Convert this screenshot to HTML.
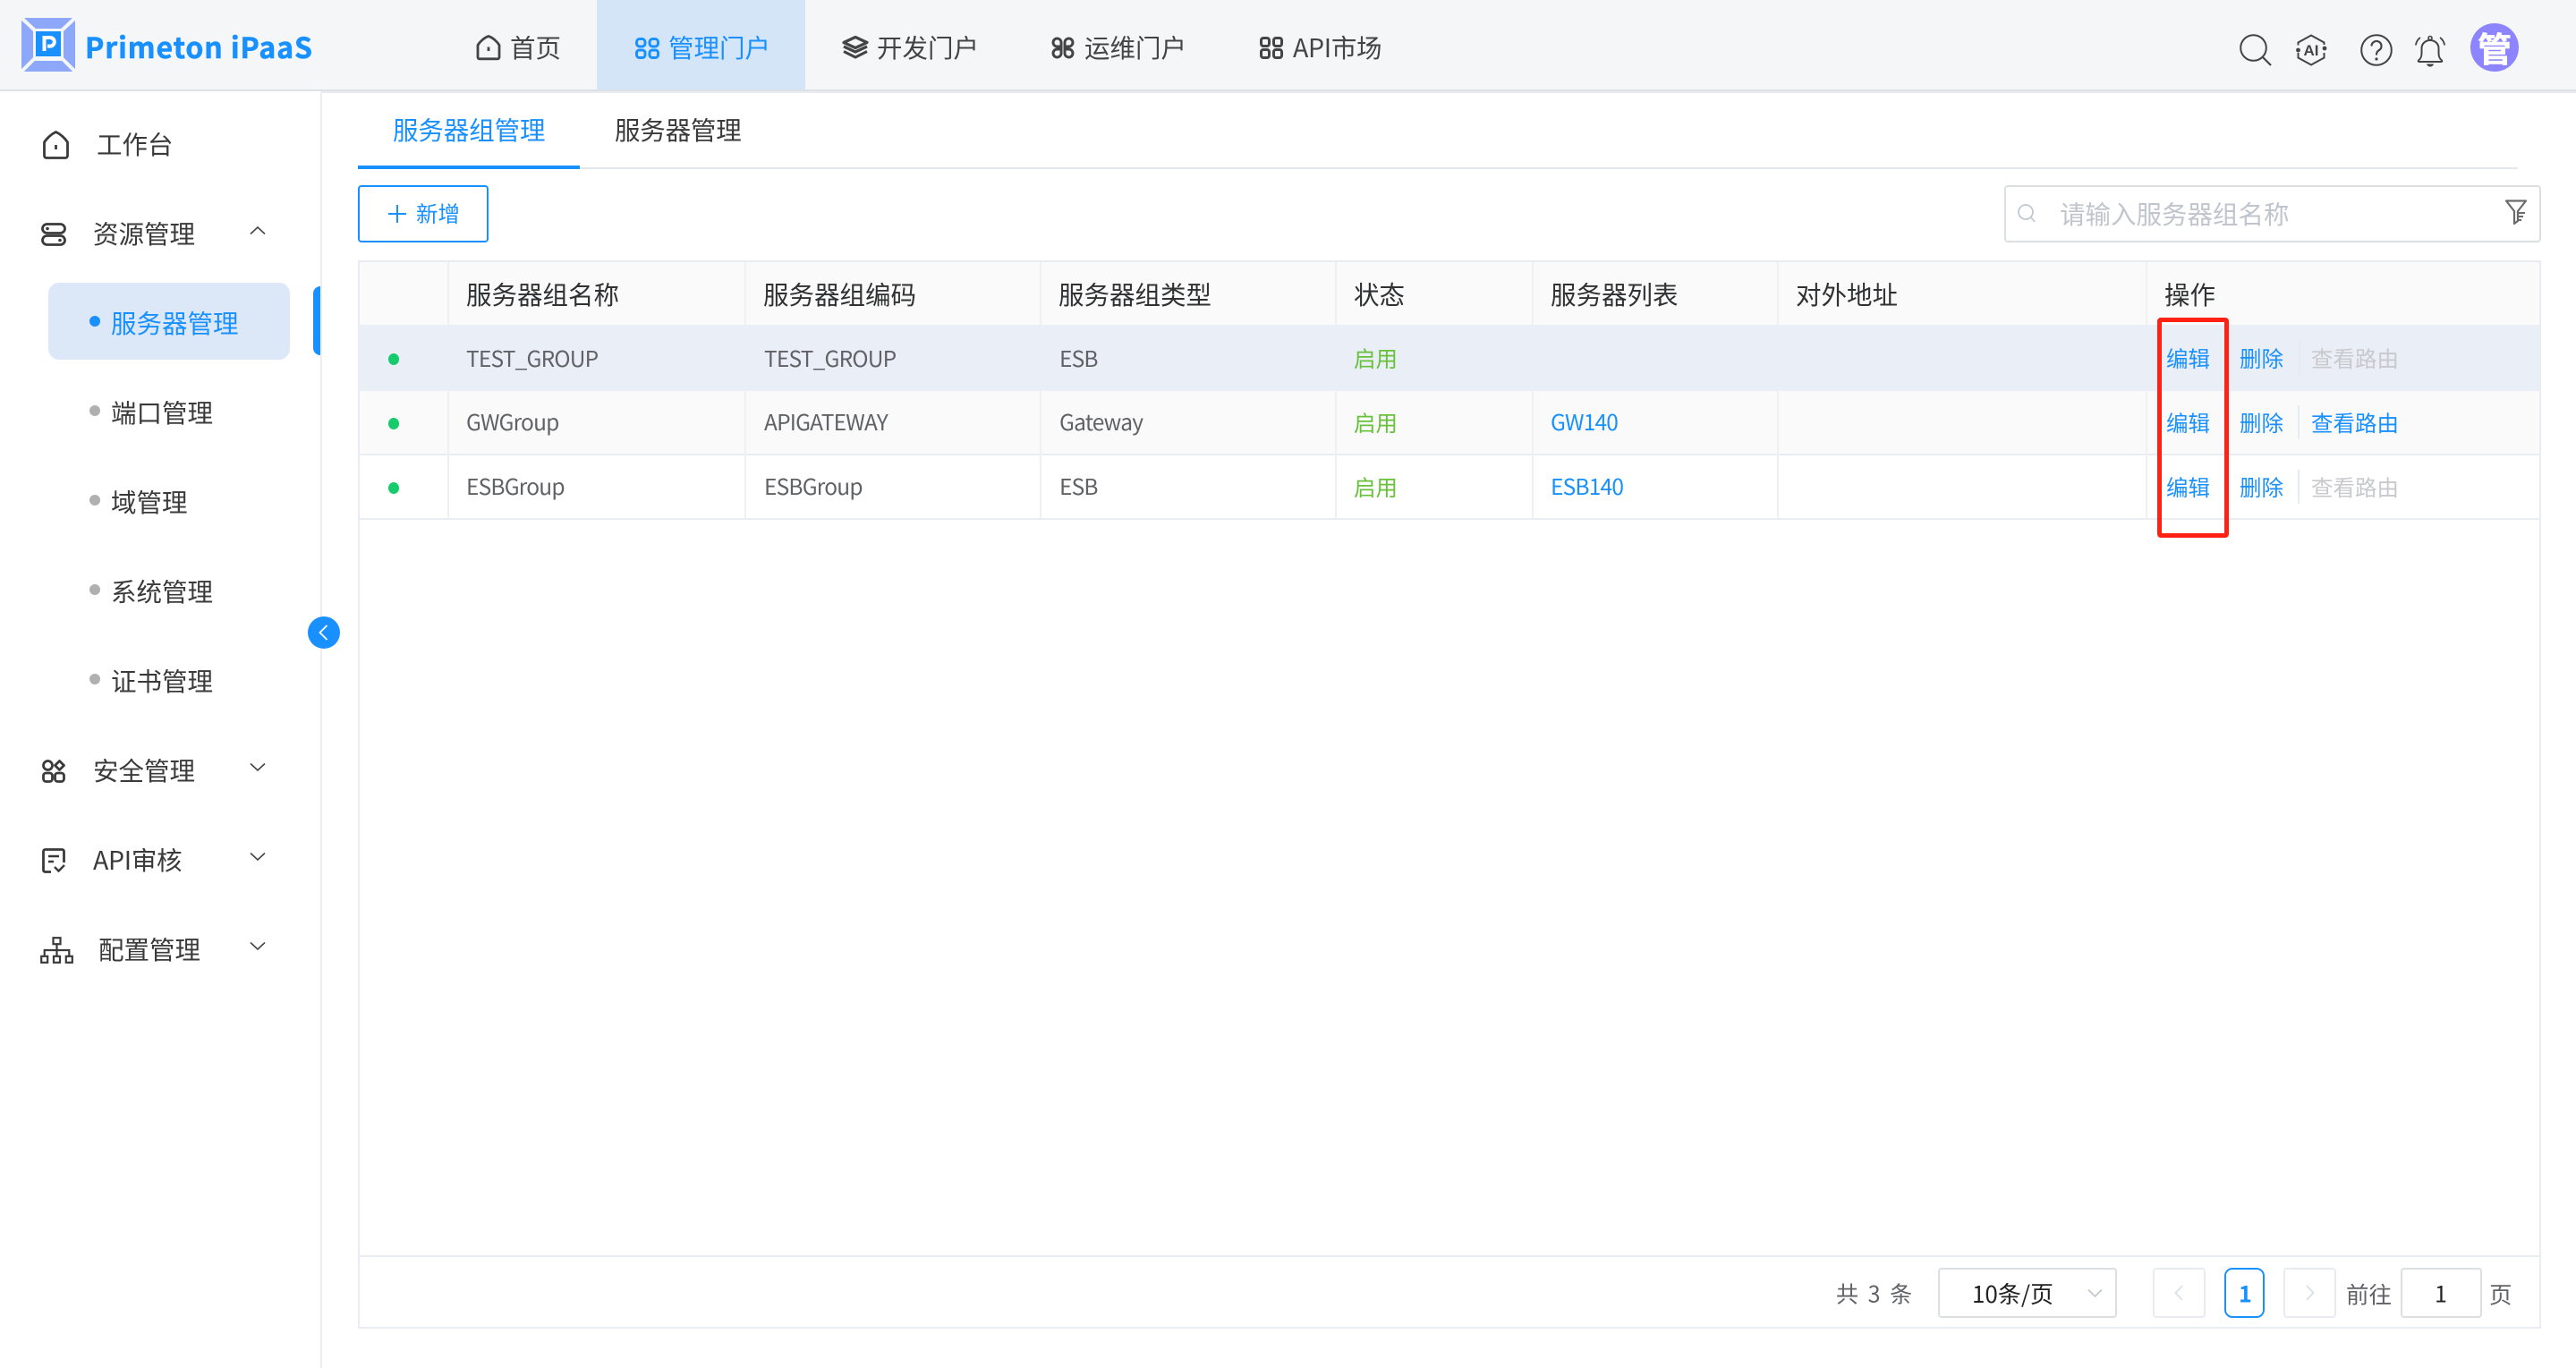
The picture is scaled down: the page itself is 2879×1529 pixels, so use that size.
<!DOCTYPE html>
<html lang="zh">
<head>
<meta charset="utf-8">
<title>Primeton iPaaS</title>
<style>
html,body{margin:0;padding:0;background:#fff}
body{width:2879px;height:1529px;position:relative;overflow:hidden;font-family:"Noto Sans CJK SC","Liberation Sans",sans-serif;color:#333}
.t{position:absolute;line-height:1;white-space:nowrap;transform:translateY(-50%)}
.b{position:absolute;box-sizing:border-box}
svg{position:absolute;overflow:visible;fill:none}
.nav{font-size:28.5px;color:#444}
.side{font-size:28.5px;color:#3a3a3a}
.th{font-size:28.5px;color:#303133}
.td{font-size:24.5px;color:#606266}
.l{letter-spacing:-.8px}
.blue{color:#1890ff}
.green{color:#67c23a}
.dis{color:#c8c9cc}
.dot{position:absolute;width:12px;height:12px;border-radius:50%;background:#b0b0b0}
.gd{position:absolute;width:12px;height:13px;border-radius:50%;background:#15cb6b}
</style>
</head>
<body>
<!-- header -->
<div class="b" style="left:0;top:0;width:2879px;height:100px;background:#f4f6f8"></div>
<div class="b" style="left:0;top:100px;width:2879px;height:2px;background:#dfe1e4"></div>
<div class="b" style="left:360px;top:102px;width:2519px;height:2px;background:#e8ebef"></div>
<div class="b" style="left:667px;top:0;width:233px;height:100px;background:#d4e5f8"></div>

<!-- logo -->
<svg style="left:24px;top:20px" width="60" height="60" viewBox="0 0 60 60">
<rect width="60" height="60" rx="4" fill="#8da8f8"/>
<path d="M0 0L16 15M60 0L44 15M0 60L16 44M60 60L44 44" stroke="#f4f6f8" stroke-width="4"/>
<rect x="13" y="12" width="34" height="36" fill="#f4f6f8"/>
<rect x="16" y="15" width="28" height="28" fill="#1890ff"/>
<path d="M25.500 37V22h6.500a4.800 4.800 0 0 1 0 9.600h-3" stroke="#fff" stroke-width="4"/>
</svg>
<div class="t" style="left:95px;top:52px;font-size:32px;font-weight:700;color:#1890ff;letter-spacing:.9px;-webkit-text-stroke:.5px #1890ff">Primeton iPaaS</div>

<!-- nav -->
<svg style="left:532px;top:39px" width="28" height="28" viewBox="0 0 28 28"><path d="M2 11.500C4 8 9 3 14 1.500C19 3 24 8 26 11.500V25a1.800 1.800 0 0 1-1.800 1.800H3.800A1.800 1.800 0 0 1 2 25Z" stroke="#444" stroke-width="2.800"/><path d="M14 13.500V18" stroke="#444" stroke-width="2.800"/></svg>
<div class="t nav" style="left:570px;top:53px">首页</div>

<svg style="left:710px;top:42px" width="27" height="24" viewBox="0 0 27 24"><g stroke="#1890ff" stroke-width="3"><rect x="1.500" y="1.500" width="9.500" height="8.500" rx="3.500"/><rect x="16" y="1.500" width="9.500" height="8.500" rx="3.500"/><rect x="1.500" y="14" width="9.500" height="8.500" rx="3"/><rect x="16" y="14" width="9.500" height="8.500" rx="3"/></g></svg>
<div class="t nav blue" style="left:747px;top:53px">管理门户</div>

<svg style="left:941px;top:40px" width="30" height="26" viewBox="0 0 30 26"><g stroke="#444" stroke-width="3.200" stroke-linejoin="round"><path d="M15 1.500L28 7.500L15 13.500L2 7.500Z"/><path d="M2 12L15 18L28 12"/><path d="M2 17.500L15 24L28 17.500"/></g></svg>
<div class="t nav" style="left:980px;top:53px">开发门户</div>

<svg style="left:1175px;top:41px" width="26" height="25" viewBox="0 0 26 25"><g stroke="#444" stroke-width="3"><path d="M11 11H6a4.500 4.500 0 1 1 5-5Z"/><path d="M15 11h5a4.500 4.500 0 1 0-5-5Z"/><path d="M11 14H6a4.500 4.500 0 1 0 5 5Z"/><path d="M15 14h5a4.500 4.500 0 1 1-5 5Z"/></g></svg>
<div class="t nav" style="left:1212px;top:53px">运维门户</div>

<svg style="left:1408px;top:41px" width="26" height="25" viewBox="0 0 26 25"><g stroke="#444" stroke-width="3"><rect x="1.500" y="1.500" width="9" height="9" rx="2.500"/><rect x="15.500" y="1.500" width="9" height="9" rx="2.500"/><rect x="1.500" y="14.500" width="9" height="9" rx="2.500"/><rect x="15.500" y="14.500" width="9" height="9" rx="2.500"/></g></svg>
<div class="t nav" style="left:1445px;top:53px;letter-spacing:-.3px">API市场</div>

<!-- header right icons -->
<svg style="left:2503px;top:38px" width="36" height="36" viewBox="0 0 36 36"><circle cx="15.500" cy="15.500" r="14.300" stroke="#444" stroke-width="2"/><path d="M26 26L35 35" stroke="#444" stroke-width="2.200"/></svg>
<svg style="left:2566px;top:38px" width="35" height="36" viewBox="0 0 35 36"><path d="M2.500 12.500V9.500L17 1.500L31.500 9.500V12M31.500 21V26.500L17 34.500L2.500 26.500V21" stroke="#444" stroke-width="2"/><circle cx="2.500" cy="18" r="2.400" fill="#444"/><circle cx="32" cy="16" r="2.400" fill="#444"/><text x="17" y="24" text-anchor="middle" font-family="Liberation Sans,sans-serif" font-weight="700" font-size="17" fill="#444">AI</text></svg>
<svg style="left:2638px;top:38px" width="36" height="36" viewBox="0 0 36 36"><circle cx="18" cy="18" r="16.800" stroke="#444" stroke-width="2"/><path d="M12.500 13.500a5.500 5.500 0 1 1 8.500 4.600c-2 1.300-3 2.400-3 5.400" stroke="#444" stroke-width="2.200"/><circle cx="18" cy="28" r="1.600" fill="#444"/></svg>
<svg style="left:2699px;top:39px" width="34" height="36" viewBox="0 0 34 36"><path d="M4 28.500c2.500-2 3.500-4 3.500-8V15c0-5 4-9 9.500-9s9.500 4 9.500 9v5.500c0 4 1 6 3.500 8 .6.600.2 1.500-.6 1.500H4.600c-.8 0-1.200-.9-.6-1.500Z" stroke="#444" stroke-width="2"/><circle cx="17" cy="3.500" r="2" stroke="#444" stroke-width="1.600"/><path d="M13 32.500h8c-.6 2-2.200 3-4 3s-3.400-1-4-3Z" fill="#444"/><path d="M6 3C3 5 1.500 8 .8 11.500M28 3c3 2 4.500 5 5.200 8.500" stroke="#444" stroke-width="1.800"/></svg>
<div class="b" style="left:2761px;top:26px;width:54px;height:54px;border-radius:50%;background:#8c85ff"></div>
<div class="t" style="left:2769px;top:53px;font-size:38px;font-weight:700;color:#fff;-webkit-text-stroke:.6px #fff">管</div>

<!-- sidebar -->
<div class="b" style="left:358px;top:102px;width:2px;height:1427px;background:#eeeeee"></div>
<svg style="left:48px;top:146px" width="29" height="32" viewBox="0 0 29 32"><path d="M1.500 13C4 9 9 4 14.500 1.500C20 4 25 9 27.500 13V28a2.500 2.500 0 0 1-2.500 2.500H4A2.500 2.500 0 0 1 1.500 28Z" stroke="#3a3a3a" stroke-width="2.800"/><path d="M14.500 16V21" stroke="#3a3a3a" stroke-width="2.800"/></svg>
<div class="t side" style="left:108px;top:161px">工作台</div>

<svg style="left:46px;top:249px" width="28" height="26" viewBox="0 0 28 26"><g stroke="#3a3a3a" stroke-width="2.800"><rect x="1.500" y="1.500" width="25" height="10" rx="5"/><rect x="1.500" y="14.500" width="25" height="10" rx="5"/></g><circle cx="7" cy="6.500" r="1.800" fill="#3a3a3a"/><circle cx="21" cy="19.500" r="1.800" fill="#3a3a3a"/></svg>
<div class="t side" style="left:104px;top:261px">资源管理</div>
<svg style="left:279px;top:253px" width="18" height="9" viewBox="0 0 18 9"><path d="M1 8.500L9 1L17 8.500" stroke="#444" stroke-width="1.600"/></svg>

<div class="b" style="left:54px;top:316px;width:270px;height:86px;border-radius:12px;background:#dce8f7"></div>
<div class="b" style="left:350px;top:320px;width:8px;height:77px;border-radius:8px 0 0 8px;background:#1890ff"></div>
<div class="dot" style="left:100px;top:353px;background:#1890ff"></div>
<div class="t side blue" style="left:124px;top:361px">服务器管理</div>
<div class="dot" style="left:100px;top:453px"></div>
<div class="t side" style="left:124px;top:461px">端口管理</div>
<div class="dot" style="left:100px;top:553px"></div>
<div class="t side" style="left:124px;top:561px">域管理</div>
<div class="dot" style="left:100px;top:653px"></div>
<div class="t side" style="left:124px;top:661px">系统管理</div>
<div class="dot" style="left:100px;top:753px"></div>
<div class="t side" style="left:124px;top:761px">证书管理</div>

<svg style="left:47px;top:849px" width="26" height="26" viewBox="0 0 26 26"><g stroke="#3a3a3a" stroke-width="2.800"><circle cx="6.500" cy="6.500" r="5"/><path d="M19.500 1.500L24.500 6.500L19.500 11.500L14.500 6.500Z" stroke-linejoin="round"/><rect x="1.500" y="15" width="10" height="9.500" rx="3"/><rect x="14.500" y="15" width="10" height="9.500" rx="3"/></g></svg>
<div class="t side" style="left:104px;top:861px">安全管理</div>
<svg style="left:279px;top:853px" width="18" height="9" viewBox="0 0 18 9"><path d="M1 .5L9 8L17 .5" stroke="#444" stroke-width="1.600"/></svg>

<svg style="left:47px;top:948px" width="26" height="28" viewBox="0 0 26 28"><path d="M10 26.500H3.500a2 2 0 0 1-2-2V3.500a2 2 0 0 1 2-2h19a2 2 0 0 1 2 2V16" stroke="#3a3a3a" stroke-width="2.800"/><path d="M7 9h12M7 15h6M14 21l4.500 4.500L25 19" stroke="#3a3a3a" stroke-width="2.400"/></svg>
<div class="t side" style="left:104px;top:961px;letter-spacing:-.3px">API审核</div>
<svg style="left:279px;top:953px" width="18" height="9" viewBox="0 0 18 9"><path d="M1 .5L9 8L17 .5" stroke="#444" stroke-width="1.600"/></svg>

<svg style="left:45px;top:1047px" width="37" height="30" viewBox="0 0 37 30"><g stroke="#3a3a3a" stroke-width="2.200"><rect x="14.500" y="1.200" width="8" height="7"/><rect x="1.200" y="21.800" width="7" height="7"/><rect x="15" y="21.800" width="7" height="7"/><rect x="28.800" y="21.800" width="7" height="7"/><path d="M18.500 8.500V15M4.700 21.500V15H32.300V21.500M18.500 15V21.500"/></g></svg>
<div class="t side" style="left:110px;top:1061px">配置管理</div>
<svg style="left:279px;top:1053px" width="18" height="9" viewBox="0 0 18 9"><path d="M1 .5L9 8L17 .5" stroke="#444" stroke-width="1.600"/></svg>

<div class="b" style="left:344px;top:689px;width:36px;height:36px;border-radius:50%;background:#1890ff"></div>
<svg style="left:356px;top:698px" width="11" height="18" viewBox="0 0 11 18"><path d="M9.500 1L1.500 9L9.500 17" stroke="#fff" stroke-width="1.800"/></svg>

<!-- tabs -->
<div class="t th blue" style="left:439px;top:145px;letter-spacing:-.1px">服务器组管理</div>
<div class="t th" style="left:687px;top:145px;color:#3a3a3a;letter-spacing:-.2px">服务器管理</div>
<div class="b" style="left:400px;top:187px;width:2414px;height:2px;background:#e4e7ed"></div>
<div class="b" style="left:400px;top:185px;width:248px;height:4px;background:#1890ff"></div>

<!-- add button -->
<div class="b" style="left:400px;top:207px;width:146px;height:64px;border:2px solid #1890ff;border-radius:4px;background:#fff"></div>
<svg style="left:434px;top:229px" width="20" height="20" viewBox="0 0 20 20"><path d="M10 0V20M0 10H20" stroke="#1890ff" stroke-width="2"/></svg>
<div class="t blue" style="left:465px;top:239px;font-size:24.500px">新增</div>

<!-- search -->
<div class="b" style="left:2240px;top:207px;width:600px;height:64px;border:2px solid #dcdfe2;border-radius:4px;background:#fff"></div>
<svg style="left:2255px;top:228px" width="20" height="21" viewBox="0 0 20 21"><circle cx="9" cy="9" r="8" stroke="#c0c8d4" stroke-width="1.800"/><path d="M15 15L19 20" stroke="#c0c8d4" stroke-width="1.800"/></svg>
<div class="t" style="left:2302px;top:239px;font-size:28.500px;color:#c0c4cc">请输入服务器组名称</div>
<svg style="left:2800px;top:223px" width="24" height="28" viewBox="0 0 24 28"><path d="M1 1.500H23L14 13V24L10 27V13Z" stroke="#6a6a6a" stroke-width="2.200" stroke-linejoin="round"/><path d="M14 15H22M14 19H20M14 23H18" stroke="#6a6a6a" stroke-width="2"/></svg>

<!-- table frame -->
<div class="b" style="left:400px;top:291px;width:2440px;height:1194px;border:2px solid #e9edf3;background:#fff"></div>
<div class="b" style="left:402px;top:293px;width:2436px;height:70px;background:#fafafa"></div>
<div class="b" style="left:402px;top:363px;width:2436px;height:74px;background:#eaeef7"></div>
<div class="b" style="left:402px;top:437px;width:2436px;height:70px;background:#fafafa"></div>
<div class="b" style="left:402px;top:507px;width:2436px;height:2px;background:#e9edf3"></div>
<div class="b" style="left:402px;top:579px;width:2436px;height:2px;background:#e9edf3"></div>
<div class="b" style="left:402px;top:1403px;width:2436px;height:2px;background:#e9edf3"></div>
<!-- column lines -->
<div class="b" style="left:500px;top:293px;width:2px;height:70px;background:#eef0f4"></div>
<div class="b" style="left:832px;top:293px;width:2px;height:70px;background:#eef0f4"></div>
<div class="b" style="left:1162px;top:293px;width:2px;height:70px;background:#eef0f4"></div>
<div class="b" style="left:1492px;top:293px;width:2px;height:70px;background:#eef0f4"></div>
<div class="b" style="left:1712px;top:293px;width:2px;height:70px;background:#eef0f4"></div>
<div class="b" style="left:1986px;top:293px;width:2px;height:70px;background:#eef0f4"></div>
<div class="b" style="left:2398px;top:293px;width:2px;height:70px;background:#eef0f4"></div>
<div class="b" style="left:500px;top:437px;width:2px;height:142px;background:#eef0f4"></div>
<div class="b" style="left:832px;top:437px;width:2px;height:142px;background:#eef0f4"></div>
<div class="b" style="left:1162px;top:437px;width:2px;height:142px;background:#eef0f4"></div>
<div class="b" style="left:1492px;top:437px;width:2px;height:142px;background:#eef0f4"></div>
<div class="b" style="left:1712px;top:437px;width:2px;height:142px;background:#eef0f4"></div>
<div class="b" style="left:1986px;top:437px;width:2px;height:142px;background:#eef0f4"></div>
<div class="b" style="left:2398px;top:437px;width:2px;height:142px;background:#eef0f4"></div>

<!-- table head -->
<div class="t th" style="left:521px;top:329px">服务器组名称</div>
<div class="t th" style="left:853px;top:329px">服务器组编码</div>
<div class="t th" style="left:1183px;top:329px">服务器组类型</div>
<div class="t th" style="left:1513px;top:329px">状态</div>
<div class="t th" style="left:1733px;top:329px">服务器列表</div>
<div class="t th" style="left:2007px;top:329px">对外地址</div>
<div class="t th" style="left:2419px;top:329px">操作</div>

<!-- rows -->
<div class="gd" style="left:434px;top:395px"></div>
<div class="t td l" style="left:521px;top:401px">TEST_GROUP</div>
<div class="t td l" style="left:854px;top:401px">TEST_GROUP</div>
<div class="t td l" style="left:1184px;top:401px">ESB</div>
<div class="t td green" style="left:1513px;top:401px">启用</div>
<div class="t td blue" style="left:2421px;top:401px">编辑</div>
<div class="t td blue" style="left:2503px;top:401px">删除</div>
<div class="t td dis" style="left:2583px;top:401px">查看路由</div>
<div class="b" style="left:2569px;top:381px;width:2px;height:38px;background:#e6eaf1"></div>

<div class="gd" style="left:434px;top:467px"></div>
<div class="t td l" style="left:521px;top:472px">GWGroup</div>
<div class="t td l" style="left:854px;top:472px">APIGATEWAY</div>
<div class="t td l" style="left:1184px;top:472px">Gateway</div>
<div class="t td green" style="left:1513px;top:473px">启用</div>
<div class="t td blue l" style="left:1733px;top:472px">GW140</div>
<div class="t td blue" style="left:2421px;top:473px">编辑</div>
<div class="t td blue" style="left:2503px;top:473px">删除</div>
<div class="t td blue" style="left:2583px;top:473px">查看路由</div>
<div class="b" style="left:2568px;top:453px;width:2px;height:38px;background:#e6eaf1"></div>

<div class="gd" style="left:434px;top:539px"></div>
<div class="t td l" style="left:521px;top:544px">ESBGroup</div>
<div class="t td l" style="left:854px;top:544px">ESBGroup</div>
<div class="t td l" style="left:1184px;top:544px">ESB</div>
<div class="t td green" style="left:1513px;top:545px">启用</div>
<div class="t td blue l" style="left:1733px;top:544px">ESB140</div>
<div class="t td blue" style="left:2421px;top:545px">编辑</div>
<div class="t td blue" style="left:2503px;top:545px">删除</div>
<div class="t td dis" style="left:2583px;top:545px">查看路由</div>
<div class="b" style="left:2568px;top:525px;width:2px;height:38px;background:#e6eaf1"></div>

<!-- red highlight -->
<div class="b" style="left:2411px;top:355px;width:80px;height:246px;border:5.500px solid #ff2214;border-radius:4px"></div>

<!-- pagination -->
<div class="t td" style="left:2052px;top:1446px;font-size:25px;word-spacing:5px">共 3 条</div>
<div class="b" style="left:2166px;top:1417px;width:200px;height:56px;border:2px solid #dcdfe2;border-radius:4px"></div>
<div class="t" style="left:2204px;top:1446px;font-size:26px;color:#222">10条/页</div>
<svg style="left:2333px;top:1441px" width="17" height="9" viewBox="0 0 17 9"><path d="M1 .5L8.500 8L16 .5" stroke="#c0c4cc" stroke-width="1.600"/></svg>
<div class="b" style="left:2406px;top:1417px;width:59px;height:56px;border:2px solid #e8ecf2;border-radius:4px"></div>
<svg style="left:2430px;top:1436px" width="10" height="18" viewBox="0 0 10 18"><path d="M9 1L1.500 9L9 17" stroke="#dde2ea" stroke-width="2"/></svg>
<div class="b" style="left:2486px;top:1417px;width:45px;height:56px;border:2px solid #1890ff;border-radius:9px"></div>
<div class="t blue" style="left:2502px;top:1446px;font-size:25px;font-weight:700">1</div>
<div class="b" style="left:2552px;top:1417px;width:59px;height:56px;border:2px solid #e8ecf2;border-radius:4px"></div>
<svg style="left:2577px;top:1436px" width="10" height="18" viewBox="0 0 10 18"><path d="M1 1L8.500 9L1 17" stroke="#dde2ea" stroke-width="2"/></svg>
<div class="t td" style="left:2622px;top:1446px;font-size:25.500px">前往</div>
<div class="b" style="left:2683px;top:1417px;width:91px;height:56px;border:2px solid #dcdfe2;border-radius:4px"></div>
<div class="t" style="left:2721px;top:1446px;font-size:25px;color:#222">1</div>
<div class="t td" style="left:2782px;top:1446px;font-size:25.500px">页</div>
</body>
</html>
